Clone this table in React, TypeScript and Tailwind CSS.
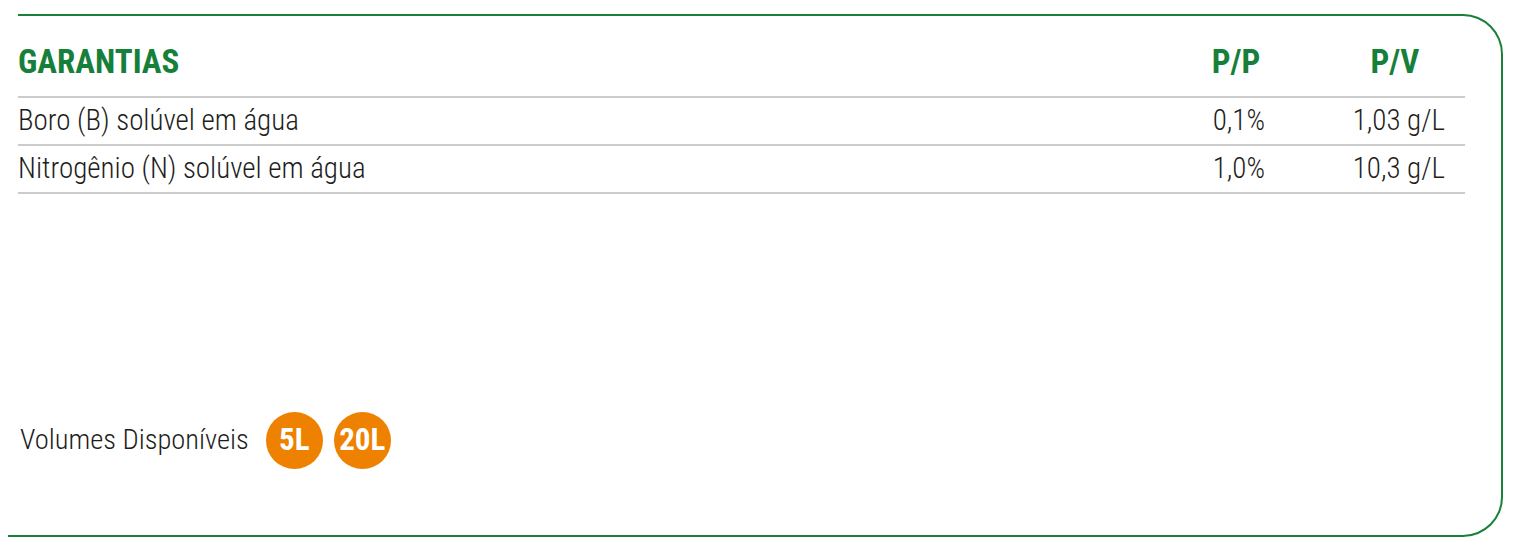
import React from "react";

const green = "text-[#16803a]";

export default function App() {
  return (
    <div className="w-[1523px] h-[547px] bg-white relative overflow-hidden font-['Roboto',sans-serif] font-stretch-condensed">
      <div className="absolute left-[8px] top-[14px] w-[1495px] h-[523px] border-t-2 border-r-2 border-b-2 border-[#19803a] rounded-tr-[40px] rounded-br-[40px]" />
      <div className="absolute left-0 top-[10px] w-[18px] h-[8px] bg-white" />
      <div className="relative pt-[16px] pl-[18px] pr-[58px] flex flex-col">
        <div className="flex items-center h-[82px] border-b-2 border-[#cccccc] pt-[12px]">
          <div className={`flex-1 text-[33px] font-bold ${green}`}>GARANTIAS</div>
          <div className={`w-[178px] text-center text-[33px] font-bold ${green}`}>P/P</div>
          <div className={`w-[140px] text-center text-[33px] font-bold ${green}`}>P/V</div>
        </div>
        {[
          ["Boro (B) solúvel em água", "0,1%", "1,03 g/L"],
          ["Nitrogênio (N) solúvel em água", "1,0%", "10,3 g/L"],
        ].map((r) => (
          <div key={r[0]} className="flex items-center h-[48px] border-b-2 border-[#cccccc] text-[29px] font-light text-[#1d1d1b]">
            <div className="flex-1">{r[0]}</div>
            <div className="w-[178px] text-right pr-[60px]">{r[1]}</div>
            <div className="w-[140px] text-right pr-[20px]">{r[2]}</div>
          </div>
        ))}
        <div className="flex items-center mt-[218px] gap-[17px]">
          <div className="text-[28.5px] font-light text-[#1d1d1b] pl-[2px]">Volumes Disponíveis</div>
          <div className="flex gap-[11px]">
            <div className="w-[57px] h-[57px] rounded-full bg-[#ef8100] text-white font-bold text-[31px] flex items-center justify-center">5L</div>
            <div className="w-[57px] h-[57px] rounded-full bg-[#ef8100] text-white font-bold text-[31px] flex items-center justify-center">20L</div>
          </div>
        </div>
      </div>
    </div>
  );
}
